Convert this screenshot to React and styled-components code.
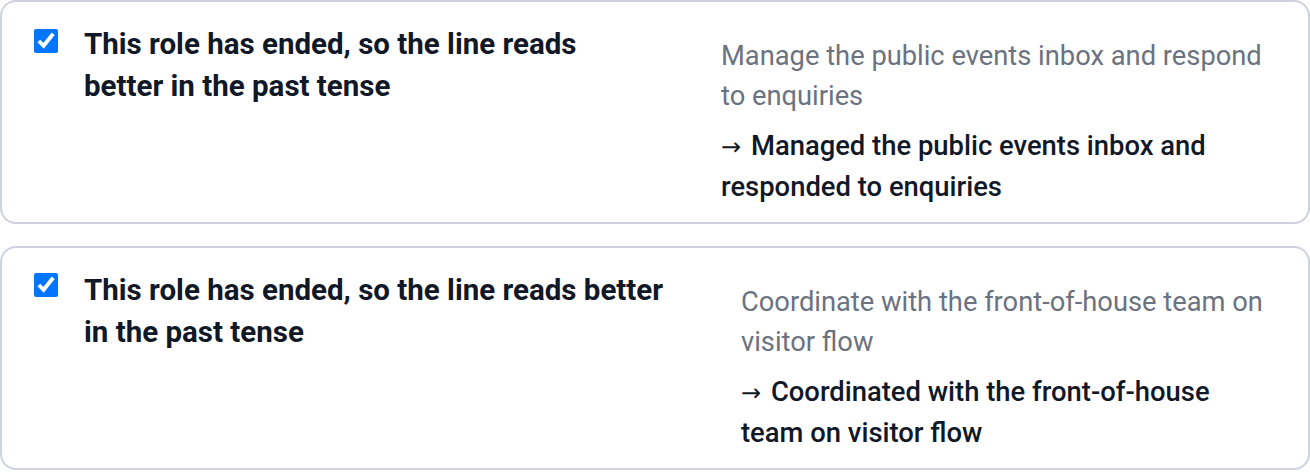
import React from "react";
import styled, { createGlobalStyle } from "styled-components";

const GlobalStyle = createGlobalStyle`
  html, body { margin: 0; padding: 0; background: #ffffff; }
  body { font-family: Roboto, "Liberation Sans", sans-serif; color: #111827; }
  * { box-sizing: border-box; }
`;

const List = styled.div`
  display: flex;
  flex-direction: column;
  gap: 22px;
  width: 1310px;
`;

const Card = styled.div`
  display: flex;
  justify-content: space-between;
  align-items: flex-start;
  height: 224px;
  padding: 21px 32px 16px 32px;
  border: 2px solid #cdd2dd;
  border-radius: 16px;
  background: #ffffff;
`;

const Choice = styled.label`
  display: flex;
  align-items: flex-start;
  gap: 26px;
  cursor: pointer;
`;

const Box = styled.input.attrs({ type: "checkbox" })`
  flex: none;
  width: 24px;
  height: 24px;
  margin: ${(p) => p.$top}px 0 0 0;
  accent-color: #0075ff;
`;

const Reason = styled.span`
  display: block;
  width: ${(p) => p.$width}px;
  font-size: 29.5px;
  line-height: 42px;
  font-weight: 700;
  color: #111827;
`;

const Change = styled.div`
  display: flex;
  flex-direction: column;
  gap: 10px;
  width: ${(p) => p.$width}px;
  margin-top: 13px;
`;

const Before = styled.div`
  font-size: 27.3px;
  line-height: 40px;
  font-weight: 400;
  color: #6b7280;
`;

const After = styled.div`
  font-size: 27.4px;
  line-height: 40px;
  font-weight: 500;
  color: #111827;
`;

const Arrow = styled.span`
  font-family: "DejaVu Sans", sans-serif;
  font-size: 24px;
  font-weight: 400;
  margin-right: 3px;
`;

const items = [
  {
    id: 1,
    reason: "This role has ended, so the line reads better in the past tense",
    reasonWidth: 540,
    boxTop: 6,
    before: "Manage the public events inbox and respond to enquiries",
    after: "Managed the public events inbox and responded to enquiries",
    changeWidth: 555,
  },
  {
    id: 2,
    reason: "This role has ended, so the line reads better in the past tense",
    reasonWidth: 600,
    boxTop: 4,
    before: "Coordinate with the front-of-house team on visitor flow",
    after: "Coordinated with the front-of-house team on visitor flow",
    changeWidth: 535,
  },
];

export default function App() {
  return (
    <>
      <GlobalStyle />
      <List>
        {items.map((it) => (
          <Card key={it.id}>
            <Choice>
              <Box defaultChecked $top={it.boxTop} />
              <Reason $width={it.reasonWidth}>{it.reason}</Reason>
            </Choice>
            <Change $width={it.changeWidth}>
              <Before>{it.before}</Before>
              <After>
                <Arrow>→</Arrow> {it.after}
              </After>
            </Change>
          </Card>
        ))}
      </List>
    </>
  );
}
